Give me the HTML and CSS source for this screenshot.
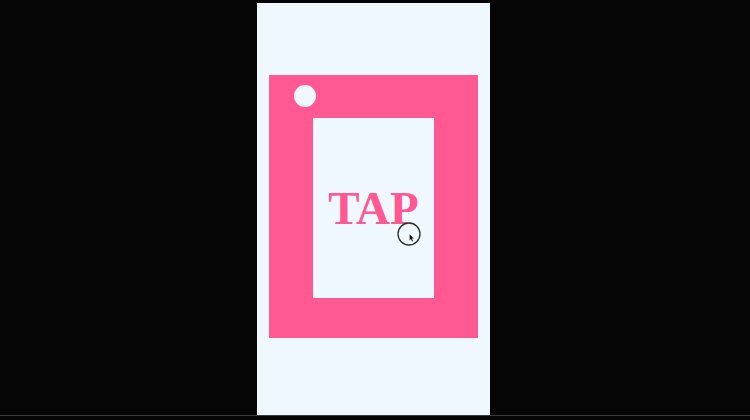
FILE: index.html
```html
<!DOCTYPE html>
<html>
<head>
<meta charset="utf-8">
<link rel="stylesheet" href="styles.css">
</head>
<body>
<div class="stage">
  <div class="phone">
    <div class="card">
      <span class="dot"></span>
      <div class="inner">
        <span class="tap">TAP</span>
      </div>
      <span class="cursor">
        <svg width="24" height="24" viewBox="0 0 24 24">
          <circle cx="12" cy="12" r="11" fill="none" stroke="#2b2b2b" stroke-width="1.3"/>
          <path d="M12.6 12.2 L12.6 18.4 L14 17 L15.1 19.4 L16 19 L14.9 16.6 L16.8 16.5 Z" fill="#111"/>
        </svg>
      </span>
    </div>
  </div>
</div>
</body>
</html>
```
FILE: styles.css
```css
html, body {
  margin: 0;
  padding: 0;
  background: #050505;
  width: 750px;
  height: 420px;
  overflow: hidden;
}
.stage {
  height: 412px;
  padding-top: 3px;
  display: flex;
  justify-content: center;
  border-bottom: 1px solid #3c3c3c;
}
.phone {
  width: 233px;
  height: 412px;
  margin-left: -3px;
  background: #f0f8ff;
  box-sizing: border-box;
  padding: 72px 0 0 12px;
}
.card {
  position: relative;
  width: 209px;
  height: 263px;
  background: #ff5893;
  box-sizing: border-box;
  padding: 43px 0 0 44px;
}
.dot {
  position: absolute;
  left: 25px;
  top: 10px;
  width: 22px;
  height: 22px;
  border-radius: 50%;
  background: #f0f8ff;
}
.inner {
  width: 121px;
  height: 180px;
  background: #f0f8ff;
  display: flex;
  align-items: center;
  justify-content: center;
}
.tap {
  font-family: "Liberation Serif", "Times New Roman", serif;
  font-weight: bold;
  font-size: 47px;
  line-height: 1;
  color: #ff5893;
}
.cursor {
  position: absolute;
  left: 128px;
  top: 147px;
  width: 24px;
  height: 24px;
}
.cursor svg {
  display: block;
}
```
